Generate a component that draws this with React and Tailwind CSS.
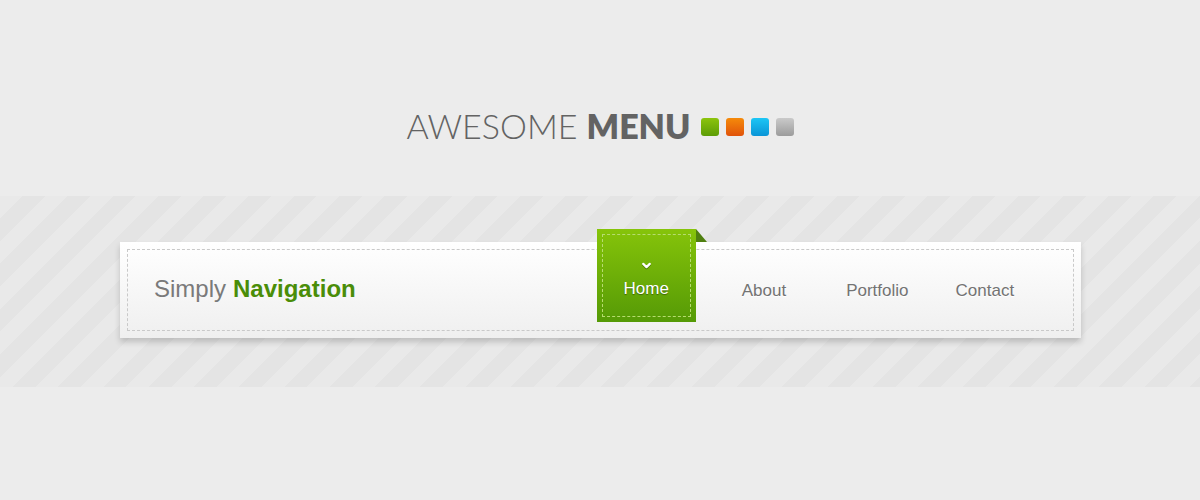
import { ChevronDown } from "lucide-react";

function Swatches() {
  return (
    <div className="flex items-center gap-[7px] ml-[10px] mt-[1px]">
      <span className="w-[18px] h-[18px] rounded-[3px] bg-gradient-to-b from-[#8cc40c] to-[#5c9c06]" />
      <span className="w-[18px] h-[18px] rounded-[3px] bg-gradient-to-b from-[#f58a0a] to-[#e0520a]" />
      <span className="w-[18px] h-[18px] rounded-[3px] bg-gradient-to-b from-[#1cc6f5] to-[#0a94d6]" />
      <span className="w-[18px] h-[18px] rounded-[3px] bg-gradient-to-b from-[#cacaca] to-[#9c9c9c]" />
    </div>
  );
}

export default function App() {
  return (
    <div className="w-[1200px] h-[500px] bg-[#ececec] font-['Liberation_Sans',Arial,sans-serif]">
      {/* titre */}
      <div className="h-[196px] flex items-start justify-center pt-[106px]">
        <h1 className="flex items-center text-[34px] leading-[40px] text-[#636363] font-['Lato',sans-serif]">
          <span className="font-light">AWESOME</span>
          <span className="font-extrabold ml-[9px]">MENU</span>
          <Swatches />
        </h1>
      </div>

      {/* bande rayée */}
      <div className="h-[191px] pt-[33px] bg-[repeating-linear-gradient(135deg,#e9e9e9_0,#e9e9e9_16px,#e4e4e4_16px,#e4e4e4_32px)]">
        <div className="ml-[120px] w-[961px] h-[96px] mt-[13px] bg-gradient-to-b from-white to-[#efefef] shadow-[0_4px_6px_rgba(0,0,0,0.18)] p-[7px]">
          <div className="h-full border border-dashed border-[#c9c9c9] flex items-center">
            <div className="pl-[26px] text-[24px] mt-[-2px]">
              <span className="text-[#7a7a7a]">Simply</span>
              <span className="font-bold text-[#4a8d08] ml-[7px]">Navigation</span>
            </div>

            <nav className="flex items-start h-full ml-[241px]">
              {/* onglet actif */}
              <div className="relative mt-[-21px] w-[99px] h-[93px] bg-gradient-to-b from-[#86c40a] to-[#559a06] p-[5px]">
                <span className="absolute left-full top-0 w-0 h-0 border-b-[13px] border-b-[#4f7f10] border-r-[11px] border-r-transparent" />
                <div className="h-full border border-dashed border-[#b6dc70] flex flex-col items-center pt-[24px]">
                  <ChevronDown size={13} strokeWidth={4} className="text-white drop-shadow-[0_1px_0_rgba(0,0,0,0.35)]" />
                  <span className="mt-[4px] text-white text-[17px] [text-shadow:0_1px_1px_rgba(0,0,0,0.4)]">Home</span>
                </div>
              </div>
              <div className="flex items-center h-full mt-[1px] text-[17px] text-[#737373] [text-shadow:0_1px_0_#fff]">
                <a className="ml-[46px]">About</a>
                <a className="ml-[60px]">Portfolio</a>
                <a className="ml-[47px]">Contact</a>
              </div>
            </nav>
          </div>
        </div>
      </div>
    </div>
  );
}
